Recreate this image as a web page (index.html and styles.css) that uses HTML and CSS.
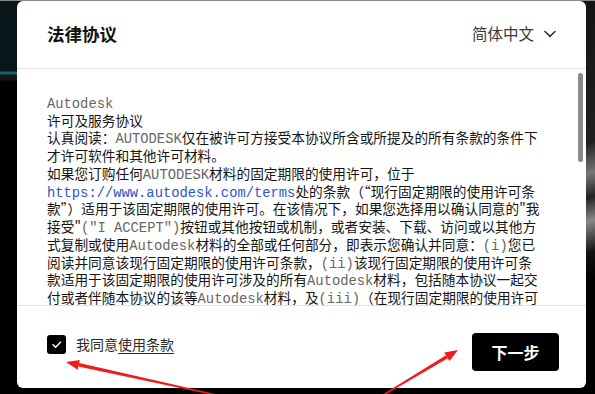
FILE: index.html
```html
<!DOCTYPE html>
<html lang="zh-CN">
<head>
<meta charset="utf-8">
<title>法律协议</title>
<link rel="stylesheet" href="styles.css">
</head>
<body>
<div class="backdrop">
  <div class="dialog">
    <header class="header">
      <h1 class="title">法律协议</h1>
      <div class="lang">
        <span>简体中文</span>
        <svg class="chev" width="12" height="8" viewBox="0 0 12 8"><path d="M1 1.5 L6 6.3 L11 1.5" fill="none" stroke="#333" stroke-width="1.6" stroke-linecap="round" stroke-linejoin="round"/></svg>
      </div>
    </header>
    <section class="content">
      <p class="terms"><span class="en">Autodesk</span><br>许可及服务协议<br>认真阅读：<span class="en">AUTODESK</span>仅在被许可方接受本协议所含或所提及的所有条款的条件下<br>才许可软件和其他许可材料。<br>如果您订购任何<span class="en">AUTODESK</span>材料的固定期限的使用许可，位于<br><span class="link">https://www.autodesk.com/terms</span>处的条款（“现行固定期限的使用许可条<br>款”）适用于该固定期限的使用许可。在该情况下，如果您选择用以确认同意的"我<br>接受"<span class="en">("I ACCEPT")</span>按钮或其他按钮或机制，或者安装、下载、访问或以其他方<br>式复制或使用<span class="en">Autodesk</span>材料的全部或任何部分，即表示您确认并同意：<span class="en">(i)</span>您已<br>阅读并同意该现行固定期限的使用许可条款，<span class="en">(ii)</span>该现行固定期限的使用许可条<br>款适用于该固定期限的使用许可涉及的所有<span class="en">Autodesk</span>材料，包括随本协议一起交<br>付或者伴随本协议的该等<span class="en">Autodesk</span>材料，及<span class="en">(iii)</span>（在现行固定期限的使用许可<br>条款中规定的范围内）本协议的条款适用于此类材料。</p>
      <div class="scrollbar"><div class="thumb"></div></div>
    </section>
    <footer class="footer">
      <label class="agree">
        <span class="box"><svg width="19" height="19" viewBox="0 0 19 19"><path d="M6 9.8 L8.6 12.3 L13.5 7.2" fill="none" stroke="#fff" stroke-width="1.5" stroke-linecap="round" stroke-linejoin="round"/></svg></span>
        <span class="agree-text">我同意<span class="terms-link">使用条款</span></span>
      </label>
      <button class="next" type="button">下一步</button>
    </footer>
  </div>
</div>
<svg class="arrows" width="595" height="394" viewBox="0 0 595 394">
  <polygon points="229.5,398.5 229.7,397.3 79.1,363.0 78.3,366.6" fill="#f21b1b"/>
  <polygon points="66,362 79.8,359.9 77.6,369.7" fill="#f21b1b"/>
  <polygon points="372.4,402.2 447.8,358.2 446.0,355.2 371.8,401.2" fill="#f21b1b"/>
  <polygon points="458,350 449.5,361.0 444.3,352.4" fill="#f21b1b"/>
</svg>
</body>
</html>
```
FILE: styles.css
```css
* { box-sizing: border-box; }

html, body {
  margin: 0;
  width: 595px;
  height: 394px;
  overflow: hidden;
}

body {
  position: relative;
  font-family: "Noto Sans CJK SC", "Liberation Sans", sans-serif;
  background:
    linear-gradient(#8a8a8a, #8a8a8a) left top / 100% 1px no-repeat,
    linear-gradient(to bottom, #08161a 0, #08161a 71px, #1d5f6b 72px, #1d5f6b 74px, #161616 75px, #161616 80px, #000 81px) left top / 17px 100% no-repeat,
    linear-gradient(165deg, #141414 0, #202020 36%, #777 44%, #222 50%, #888 56%, #111 64%, #000 72%) right top / 9px 100% no-repeat,
    #000;
}

.backdrop {
  display: flex;
  padding: 1px 9px 0 17px;
}

.dialog {
  width: 569px;
  height: 387px;
  background: #fff;
  border-radius: 6px;
  display: flex;
  flex-direction: column;
  overflow: hidden;
}

.header {
  height: 68px;
  flex: none;
  display: flex;
  align-items: center;
  justify-content: space-between;
  padding: 0 30px 3px 30px;
  border-bottom: 1px solid #e2e2e2;
}

.title {
  margin: 0;
  font-size: 17.5px;
  font-weight: 700;
  color: #111;
}

.lang {
  display: flex;
  align-items: center;
  gap: 10px;
  font-size: 15.5px;
  color: #3a3a3a;
}

.chev { display: block; margin-top: 1px; }

.content {
  height: 236px;
  flex: none;
  display: flex;
  padding-left: 30px;
  overflow: hidden;
}

.terms {
  flex: 1;
  margin: 0;
  padding-top: 25px;
  font-size: 13.7px;
  line-height: 17.6px;
  color: #141414;
  white-space: nowrap;
  overflow: hidden;
}

.en,
.link {
  font-family: "Liberation Mono", monospace;
  font-size: 13.8px;
  line-height: 1;
  color: #666;
}

.link { color: #2c57c8; }

.scrollbar {
  width: 11px;
  flex: none;
  padding: 4px 3px 0 3px;
}

.thumb {
  width: 5px;
  height: 89px;
  border-radius: 3px;
  background: #8a8a8a;
}

.footer {
  flex: 1;
  display: flex;
  justify-content: space-between;
  align-items: flex-start;
  padding: 27px 27px 0 30px;
  border-top: 1px solid #e2e2e2;
}

.agree {
  display: flex;
  align-items: center;
  gap: 10px;
  margin-top: 2px;
  font-size: 14px;
  line-height: 19px;
  color: #2a2a2a;
}

.box {
  width: 19px;
  height: 19px;
  border-radius: 3px;
  background: #000;
  display: block;
  flex: none;
}

.box svg { display: block; }

.terms-link {
  text-decoration: underline;
  text-underline-offset: 3px;
}

.next {
  width: 87px;
  height: 38px;
  border: none;
  border-radius: 4px;
  background: #000;
  color: #fff;
  font-family: "Noto Sans CJK SC", sans-serif;
  font-size: 16px;
  font-weight: 700;
  padding: 0;
}

.arrows {
  position: absolute;
  left: 0;
  top: 0;
  pointer-events: none;
}
```
